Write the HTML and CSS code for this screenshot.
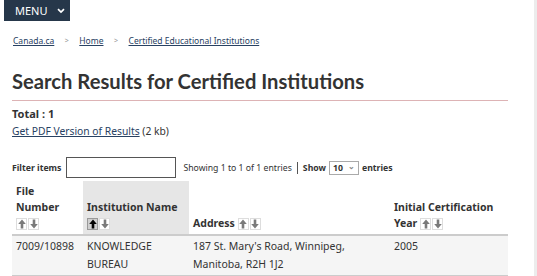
FILE: index.html
```html
<!DOCTYPE html>
<html lang="en">
<head>
    <meta charset="UTF-8">
    <title>Search Results for Certified Institutions</title>
    <link rel="stylesheet" href="styles.css">
</head>
<body>
    <header class="topbar">
        <button class="menu-btn">MENU
            <svg class="chev" viewBox="0 0 10 8" width="8" height="6"><path d="M1 1.5 L5 5.5 L9 1.5" fill="none" stroke="#fff" stroke-width="2.2"/></svg>
        </button>
    </header>

    <nav class="breadcrumb">
        <a href="#">Canada.ca</a>
        <span class="crumb-sep">&gt;</span>
        <a href="#">Home</a>
        <span class="crumb-sep">&gt;</span>
        <a href="#">Certified Educational Institutions</a>
    </nav>

    <main class="content">
        <h1>Search Results for Certified Institutions</h1>
        <p class="total">Total : 1</p>
        <p class="pdf"><a href="#">Get PDF Version of Results</a> (2 kb)</p>

        <div class="filter-bar">
            <label class="filter-label" for="filter">Filter items</label>
            <input type="text" id="filter" class="filter-input">
            <span class="info">Showing 1 to 1 of 1 entries</span>
            <span class="bar"></span>
            <span class="show">Show</span>
            <span class="select">10 <span class="caret">&#8964;</span></span>
            <span class="show">entries</span>
        </div>

        <table class="results">
            <thead>
                <tr>
                    <th class="col-file">File<br>Number<br><span class="sort"><span class="arr"><svg viewBox="0 0 8 10"><path d="M4 0.5 L7.8 5 H5.3 V9.5 H2.7 V5 H0.2 Z"/></svg></span><span class="arr"><svg viewBox="0 0 8 10"><path d="M4 9.5 L7.8 5 H5.3 V0.5 H2.7 V5 H0.2 Z"/></svg></span></span></th>
                    <th class="col-name active">Institution Name<br><span class="sort"><span class="arr on"><svg viewBox="0 0 8 10"><path d="M4 0.5 L7.8 5 H5.3 V9.5 H2.7 V5 H0.2 Z"/></svg></span><span class="arr"><svg viewBox="0 0 8 10"><path d="M4 9.5 L7.8 5 H5.3 V0.5 H2.7 V5 H0.2 Z"/></svg></span></span></th>
                    <th class="col-addr">Address <span class="sort"><span class="arr"><svg viewBox="0 0 8 10"><path d="M4 0.5 L7.8 5 H5.3 V9.5 H2.7 V5 H0.2 Z"/></svg></span><span class="arr"><svg viewBox="0 0 8 10"><path d="M4 9.5 L7.8 5 H5.3 V0.5 H2.7 V5 H0.2 Z"/></svg></span></span></th>
                    <th class="col-year">Initial Certification<br>Year <span class="sort"><span class="arr"><svg viewBox="0 0 8 10"><path d="M4 0.5 L7.8 5 H5.3 V9.5 H2.7 V5 H0.2 Z"/></svg></span><span class="arr"><svg viewBox="0 0 8 10"><path d="M4 9.5 L7.8 5 H5.3 V0.5 H2.7 V5 H0.2 Z"/></svg></span></span></th>
                </tr>
            </thead>
            <tbody>
                <tr>
                    <td>7009/10898</td>
                    <td>KNOWLEDGE<br>BUREAU</td>
                    <td>187 St. Mary's Road, Winnipeg,<br>Manitoba, R2H 1J2</td>
                    <td>2005</td>
                </tr>
            </tbody>
        </table>
    </main>
</body>
</html>
```

FILE: styles.css
```css
* {
    box-sizing: border-box;
    margin: 0;
    padding: 0;
}
html {
    background: linear-gradient(to left, #ececec 3px, #ffffff 3px);
}
body {
    font-family: 'Noto Sans', sans-serif;
    color: #333333;
    font-size: 10.5px;
}
a {
    color: #284162;
}
.topbar {
    padding-left: 4px;
}
.menu-btn {
    display: flex;
    align-items: center;
    gap: 9px;
    height: 21px;
    width: 66px;
    padding-left: 11px;
    background-color: #26374a;
    color: #ffffff;
    border: none;
    font-family: 'Noto Sans', sans-serif;
    font-size: 11px;
}
.breadcrumb {
    display: flex;
    align-items: center;
    gap: 10.5px;
    margin: 13px 0 0 13px;
    font-size: 8.5px;
    line-height: 13px;
}
.crumb-sep {
    color: #999999;
    font-size: 7px;
}
.content {
    padding: 0 29px 0 12px;
}
h1 {
    font-family: 'Lato', sans-serif;
    font-weight: 700;
    font-size: 20.2px;
    line-height: 26px;
    margin-top: 21px;
    padding-bottom: 6px;
    border-bottom: 1px solid #ddb3b5;
    color: #333333;
}
.total {
    font-weight: 700;
    font-size: 11px;
    margin-top: 4px;
    line-height: 17px;
}
.pdf {
    font-size: 10.3px;
    line-height: 19px;
}
.filter-bar {
    display: flex;
    align-items: center;
    margin-top: 16px;
    font-size: 8.7px;
}
.filter-label {
    font-weight: 700;
    margin-right: 5px;
}
.filter-input {
    width: 110px;
    height: 21px;
    border: 1px solid #555555;
    margin-right: 7px;
}
.bar {
    width: 1px;
    height: 12px;
    margin: 0 5px;
    background-color: #555555;
}
.show {
    font-weight: 700;
}
.select {
    display: inline-flex;
    align-items: center;
    gap: 5px;
    margin: 0 3px;
    padding: 0 3px;
    height: 14px;
    border: 1px solid #aaaaaa;
    font-weight: 700;
}
.caret {
    font-size: 8px;
    color: #888888;
    line-height: 6px;
    margin-top: -4px;
}
.results {
    width: 100%;
    border-collapse: collapse;
    margin-top: 3px;
}
.results th {
    text-align: left;
    vertical-align: bottom;
    font-weight: 700;
    line-height: 16px;
    padding: 2px 4px 3px;
    border-bottom: 2px solid #cccccc;
}
.results th.active {
    background-color: #e6e6e6;
}
.col-file {
    width: 71px;
}
.col-name {
    width: 106px;
}
.col-addr {
    width: 201px;
}
.sort {
    display: inline-flex;
    gap: 1px;
    vertical-align: -2px;
}
.arr {
    display: inline-flex;
    align-items: center;
    justify-content: center;
    width: 11px;
    height: 12px;
    border: 1px solid #dddddd;
    background-color: #ffffff;
}
.arr svg {
    width: 8px;
    height: 10px;
    fill: #7a7a7a;
}
.arr.on {
    background-color: #cfcfcf;
    border-color: #999999;
}
.arr.on svg {
    fill: #000000;
}
.results td {
    vertical-align: top;
    line-height: 18px;
    padding: 1px 4px 2px;
    background-color: #f5f5f5;
    border-bottom: 1px solid #cccccc;
}
```
